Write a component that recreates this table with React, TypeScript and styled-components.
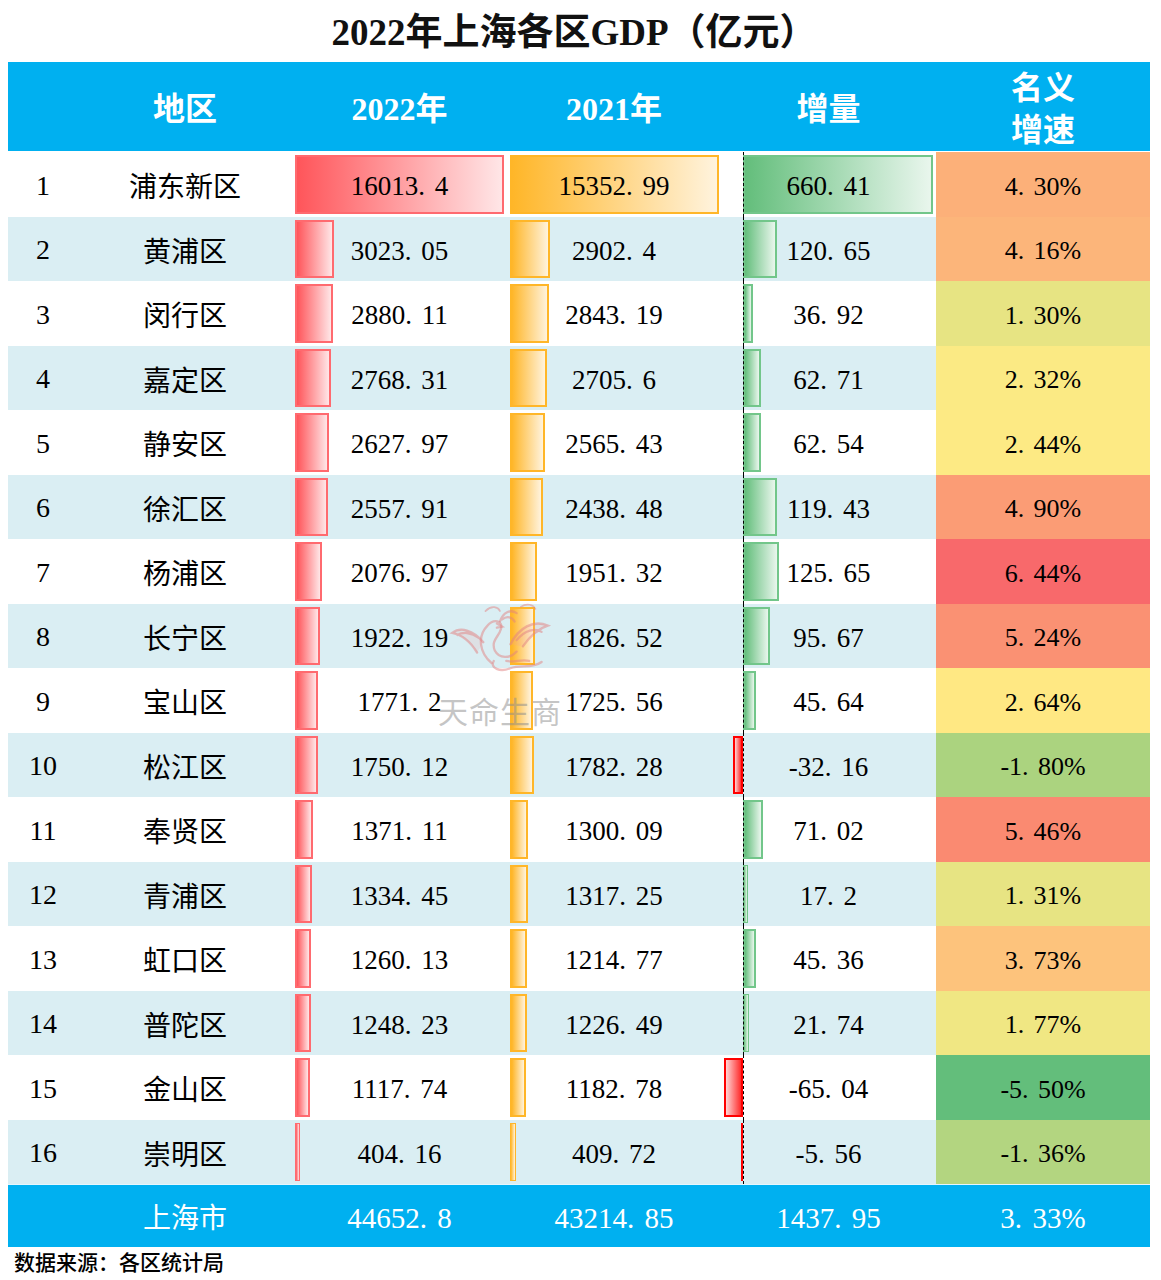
import React from 'react';
import styled, { createGlobalStyle } from 'styled-components';

const NUM = `"Liberation Serif", "Noto Sans CJK SC", serif`;
const CJK = `"Noto Sans CJK SC", "Liberation Sans", sans-serif`;
const COLS = '70px 214px 215px 214px 215px 214px';
const SPAN = 209;
const INSET = 3;

type Tone = 'red' | 'orange' | 'green' | 'neg';

const tones: Record<Tone, { border: string; fill: string }> = {
    red: { border: '#ff6a6f', fill: 'linear-gradient(to right, #ff555a, #ffe6e7)' },
    orange: { border: '#ffb628', fill: 'linear-gradient(to right, #ffb628, #fff3dd)' },
    green: { border: '#72c68a', fill: 'linear-gradient(to right, #63be7b, #e9f6ed)' },
    neg: { border: '#ff0000', fill: 'linear-gradient(to left, #ff2b2b, #ffd6d6)' },
};

const rows = [
    ['1', '浦东新区', '16013.4', '15352.99', '660.41', '4.30'],
    ['2', '黄浦区', '3023.05', '2902.4', '120.65', '4.16'],
    ['3', '闵行区', '2880.11', '2843.19', '36.92', '1.30'],
    ['4', '嘉定区', '2768.31', '2705.6', '62.71', '2.32'],
    ['5', '静安区', '2627.97', '2565.43', '62.54', '2.44'],
    ['6', '徐汇区', '2557.91', '2438.48', '119.43', '4.90'],
    ['7', '杨浦区', '2076.97', '1951.32', '125.65', '6.44'],
    ['8', '长宁区', '1922.19', '1826.52', '95.67', '5.24'],
    ['9', '宝山区', '1771.2', '1725.56', '45.64', '2.64'],
    ['10', '松江区', '1750.12', '1782.28', '-32.16', '-1.80'],
    ['11', '奉贤区', '1371.11', '1300.09', '71.02', '5.46'],
    ['12', '青浦区', '1334.45', '1317.25', '17.2', '1.31'],
    ['13', '虹口区', '1260.13', '1214.77', '45.36', '3.73'],
    ['14', '普陀区', '1248.23', '1226.49', '21.74', '1.77'],
    ['15', '金山区', '1117.74', '1182.78', '-65.04', '-5.50'],
    ['16', '崇明区', '404.16', '409.72', '-5.56', '-1.36'],
];

const max22 = Math.max(...rows.map(r => +r[2]));
const max21 = Math.max(...rows.map(r => +r[3]));
const incMin = Math.min(0, ...rows.map(r => +r[4]));
const incMax = Math.max(...rows.map(r => +r[4]));
const incScale = SPAN / (incMax - incMin);
const axisX = INSET + -incMin * incScale;

const growth = rows.map(r => +r[5]);
const gSorted = [...growth].sort((a, b) => a - b);
const gMin = gSorted[0];
const gMax = gSorted[gSorted.length - 1];
const gMid = (gSorted[7] + gSorted[8]) / 2;

const GREEN = [99, 190, 123];
const YELLOW = [255, 235, 132];
const RED = [248, 105, 107];

const mix = (a: number[], b: number[], t: number) =>
    `rgb(${a.map((c, i) => Math.round(c + (b[i] - c) * t)).join(',')})`;

const scaleColor = (v: number) =>
    v <= gMid
        ? mix(GREEN, YELLOW, (v - gMin) / (gMid - gMin))
        : mix(YELLOW, RED, (v - gMid) / (gMax - gMid));

const GlobalStyle = createGlobalStyle`
    body {
        margin: 0 8px;
        background: #fff;
        font-family: ${CJK};
    }
`;

const Page = styled.div`
    width: 1142px;
`;

const Title = styled.h1`
    margin: 0;
    height: 62px;
    line-height: 66px;
    text-align: center;
    font-family: ${NUM};
    font-size: 37px;
    font-weight: 700;
    color: #111;
    padding-right: 10px;
`;

const Table = styled.div`
    position: relative;
`;

const HeaderRow = styled.div`
    display: grid;
    grid-template-columns: ${COLS};
    height: 89px;
    align-items: center;
    background: #00b0f0;
    color: #fff;
    font-family: ${NUM};
    font-size: 32px;
    font-weight: 700;
    text-align: center;
    border-bottom: 1px solid #fff;
`;

const HeadCell = styled.div`
    line-height: 42px;
    padding-top: 4px;
`;

const Row = styled.div<{ $alt: boolean }>`
    display: grid;
    grid-template-columns: ${COLS};
    height: 64.5px;
    background: ${p => (p.$alt ? '#daeef3' : '#fff')};
`;

const Rank = styled.div`
    display: flex;
    align-items: center;
    justify-content: center;
    padding-top: 3px;
    font-family: ${NUM};
    font-size: 28px;
    color: #000;
`;

const Region = styled.div`
    display: flex;
    align-items: center;
    justify-content: center;
    padding-top: 2px;
    font-family: ${CJK};
    font-size: 28px;
    color: #000;
`;

const BarCell = styled.div`
    display: grid;
    grid-template: 1fr / 1fr;

    & > * {
        grid-area: 1 / 1;
    }
`;

const Bar = styled.div<{ $tone: Tone; $thin: boolean }>`
    justify-self: start;
    margin: 3px 0;
    box-sizing: border-box;
    border: ${p => (p.$thin ? 1 : 2)}px solid ${p => tones[p.$tone].border};
    background: ${p => tones[p.$tone].fill};
`;

const Axis = styled.div`
    justify-self: start;
    width: 0;
    border-left: 1px dashed #000;
`;

const Value = styled.span`
    align-self: center;
    justify-self: center;
    font-family: ${NUM};
    font-size: 27px;
    color: #000;
    padding-top: 5px;
`;

const GrowthCell = styled.div`
    display: flex;
    align-items: center;
    justify-content: center;
    font-family: ${NUM};
    font-size: 26px;
    color: #000;
    padding-top: 5px;
`;

const Dot = styled.span`
    margin-right: 0.36em;
`;

const FooterRow = styled.div`
    display: grid;
    grid-template-columns: ${COLS};
    height: 62px;
    align-items: center;
    background: #00b0f0;
    color: #fff;
    text-align: center;
    border-top: 1px solid #e6f6fd;
`;

const FootName = styled.div`
    font-family: ${CJK};
    font-size: 28px;
`;

const FootNum = styled.div`
    font-family: ${NUM};
    font-size: 29px;
    padding-top: 4px;
`;

const Source = styled.div`
    padding-left: 6px;
    height: 30px;
    line-height: 28px;
    font-family: ${CJK};
    font-size: 21px;
    font-weight: 500;
    color: #000;
`;

const Watermark = styled.div`
    position: absolute;
    left: 430px;
    top: 536px;
    display: flex;
    flex-direction: column;
    align-items: center;
    pointer-events: none;
`;

const MarkText = styled.div`
    margin-top: 14px;
    font-family: ${CJK};
    font-size: 30px;
    letter-spacing: 1px;
    color: rgba(140, 140, 140, 0.5);
`;

const Num = ({ text }: { text: string }) => {
    const [int, frac] = text.split('.');
    return (
        <>
            {int}
            {frac !== undefined && (
                <>
                    <Dot>.</Dot>
                    {frac}
                </>
            )}
        </>
    );
};

const Phoenix = () => (
    <svg width="104" height="76" viewBox="0 0 100 72" fill="none" stroke="rgba(226,130,130,0.5)" strokeWidth="2.2" strokeLinecap="round">
        <path d="M42 62 C30 52 28 36 38 26 C44 19 53 21 51 29 C49 37 41 40 45 50 C49 58 60 58 66 51" />
        <path d="M50 22 C53 13 60 10 66 14 M52 20 C57 16 62 18 64 22" />
        <path d="M47 24 L52 27 L47 28" />
        <path d="M60 44 C68 28 82 20 96 26 C86 29 79 36 72 46 M66 40 C74 30 84 28 90 32" fill="rgba(236,160,160,0.18)" />
        <path d="M34 42 C24 30 12 27 4 33 C14 35 22 42 28 52 M30 38 C22 32 14 32 9 35" fill="rgba(236,160,160,0.18)" />
        <path d="M44 60 C40 67 50 71 60 67 C70 63 80 68 90 61 M56 60 C64 62 70 58 78 60" />
        <path d="M36 12 C42 6 48 8 50 12 M70 8 C76 4 82 6 84 10" strokeWidth="1.6" />
    </svg>
);

const App = () => (
    <Page>
        <GlobalStyle />
        <Title>2022年上海各区GDP（亿元）</Title>
        <Table>
            <HeaderRow>
                <HeadCell />
                <HeadCell>地区</HeadCell>
                <HeadCell>2022年</HeadCell>
                <HeadCell>2021年</HeadCell>
                <HeadCell>增量</HeadCell>
                <HeadCell>
                    名义
                    <br />
                    增速
                </HeadCell>
            </HeaderRow>
            {rows.map(([rank, name, y22, y21, inc, g], i) => {
                const w22 = (+y22 / max22) * SPAN;
                const w21 = (+y21 / max21) * SPAN;
                const incV = +inc;
                const wInc = Math.abs(incV) * incScale;
                const incLeft = incV >= 0 ? axisX : axisX - wInc;
                return (
                    <Row key={rank} $alt={i % 2 === 1}>
                        <Rank>{rank}</Rank>
                        <Region>{name}</Region>
                        <BarCell>
                            <Bar $tone="red" $thin={w22 < 8} style={{ marginLeft: INSET, width: w22 }} />
                            <Value>
                                <Num text={y22} />
                            </Value>
                        </BarCell>
                        <BarCell>
                            <Bar $tone="orange" $thin={w21 < 8} style={{ marginLeft: INSET, width: w21 }} />
                            <Value>
                                <Num text={y21} />
                            </Value>
                        </BarCell>
                        <BarCell>
                            <Bar
                                $tone={incV >= 0 ? 'green' : 'neg'}
                                $thin={wInc < 8}
                                style={{ marginLeft: incLeft, width: wInc }}
                            />
                            <Axis style={{ marginLeft: axisX }} />
                            <Value>
                                <Num text={inc} />
                            </Value>
                        </BarCell>
                        <GrowthCell style={{ background: scaleColor(+g) }}>
                            <Num text={`${g}%`} />
                        </GrowthCell>
                    </Row>
                );
            })}
            <FooterRow>
                <div />
                <FootName>上海市</FootName>
                <FootNum>
                    <Num text="44652.8" />
                </FootNum>
                <FootNum>
                    <Num text="43214.85" />
                </FootNum>
                <FootNum>
                    <Num text="1437.95" />
                </FootNum>
                <FootNum>
                    <Num text="3.33%" />
                </FootNum>
            </FooterRow>
            <Watermark>
                <Phoenix />
                <MarkText>天命生商</MarkText>
            </Watermark>
        </Table>
        <Source>数据来源：各区统计局</Source>
    </Page>
);

export default App;
